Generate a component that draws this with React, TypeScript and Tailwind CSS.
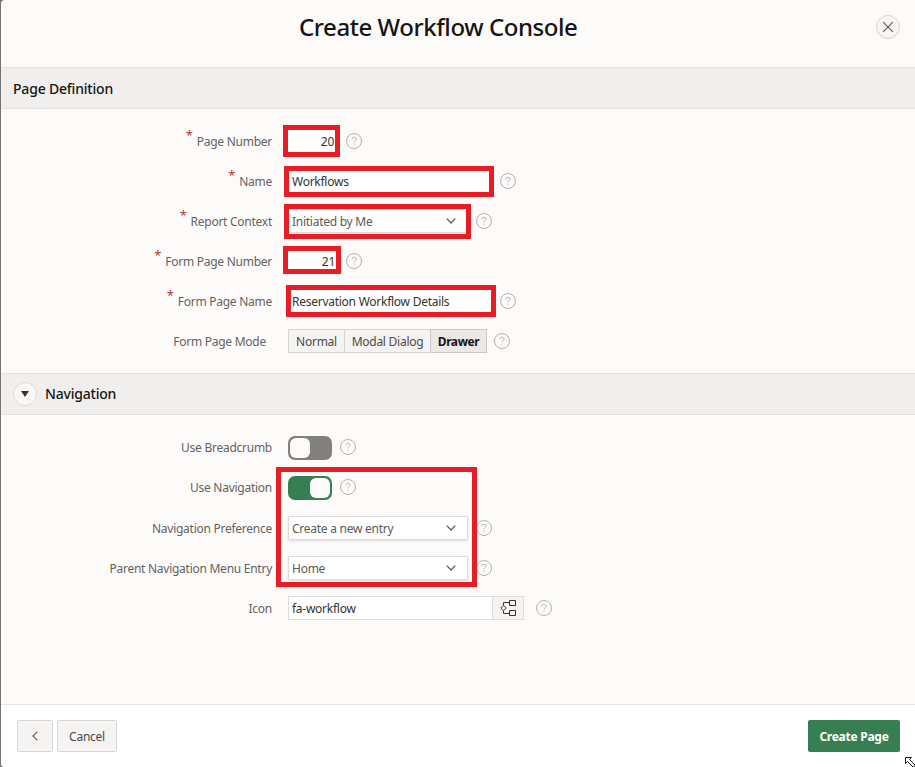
import React from "react";

function Help({ className }: { className: string }) {
  return (
    <svg className={`h-4 w-4 shrink-0 ${className}`} viewBox="0 0 16 16" fill="none" stroke="#b4b2b0" strokeWidth="1">
      <circle cx="8" cy="8" r="7.5" />
      <path d="M5.9 6.3C5.9 5 6.8 4.3 8 4.3s2.1.8 2.1 1.9c0 1.4-2.1 1.6-2.1 3.1" />
      <path d="M8 10.7v1.1" />
    </svg>
  );
}

function Chevron() {
  return (
    <svg className="h-[10px] w-[10px]" viewBox="0 0 10 10" fill="none" stroke="#5c5956" strokeWidth="1.3">
      <path d="M0.8 2.6 5 7l4.2-4.4" />
    </svg>
  );
}

function Mark({ className }: { className: string }) {
  return <div className={`pointer-events-none absolute border-[5px] border-[#e81c24] ${className}`} />;
}

type RowProps = { label: string; required?: boolean; indent?: string; children: React.ReactNode };

function Row({ label, required, indent = "mr-4", children }: RowProps) {
  return (
    <div className="relative flex h-10 items-center">
      <div className="flex w-[287px] justify-end pt-[2px]">
        <div className={`flex ${indent}`}>
          {required && <span className="-mt-[7px] mr-[4px] text-[13px] leading-4 text-[#b8372b]">*</span>}
          <span className="leading-4 whitespace-nowrap text-[#65625f]">{label}</span>
        </div>
      </div>
      {children}
    </div>
  );
}

function Field({ value, className }: { value: string; className: string }) {
  return (
    <div className={`flex items-center bg-white pt-[2px] whitespace-nowrap text-[#35322f] ${className}`}>
      {value}
    </div>
  );
}

function Select({ value }: { value: string }) {
  return (
    <div className="flex h-6 w-[180px] items-center justify-between border border-[#dfdddb] bg-white pr-[11px] pl-[3px] text-[#5c5956] shadow-[0_1px_2px_rgba(0,0,0,0.12)]">
      <span className="pt-[2px] whitespace-nowrap">{value}</span>
      <Chevron />
    </div>
  );
}

function Toggle({ on }: { on?: boolean }) {
  return (
    <div className={`mt-[2px] flex h-6 w-11 items-center rounded-[7px] px-0.5 ${on ? "justify-end bg-[#377f53]" : "bg-[#82807e]"}`}>
      <div className="h-5 w-5 rounded-[6px] bg-[#fcfbfa]" />
    </div>
  );
}

export default function App() {
  return (
    <div className="h-[767px] w-[915px] overflow-hidden bg-[#777573] pl-px font-['Noto_Sans','Liberation_Sans',sans-serif] text-[12px] leading-4 tracking-[-0.26px]">
      <div className="relative flex h-full flex-col rounded-tl-[4px] rounded-bl-[4px] bg-[#fcfbfa]">
        <header className="flex h-[67px] shrink-0 justify-end pt-[15px] pr-[15px]">
          <h1 className="-mt-[4px] mr-[299px] w-[278px] text-[24px] leading-8 font-medium tracking-[-0.43px] whitespace-nowrap text-[#161513]">Create Workflow Console</h1>
          <button className="flex h-6 w-6 items-center justify-center rounded-full border border-[#d5d3d1] bg-[#f7f6f5]">
            <svg className="h-3 w-3" viewBox="0 0 12 12" stroke="#5c5956" strokeWidth="1.1"><path d="m1.2 1.2 9.6 9.6M10.8 1.2 1.2 10.8" /></svg>
          </button>
        </header>

        <section className="h-[306px] shrink-0">
          <h2 className="flex h-[42px] items-center border-y border-[#e2e0de] bg-[#f0efee] pt-px pl-3 text-[14px] font-medium tracking-[-0.2px] text-[#161513]">Page Definition</h2>
          <div className="pt-[12px]">
            <Row label="Page Number" required>
              <Field value="20" className="h-[25px] w-[52px] justify-end pr-[6px]" /><Help className="ml-[6px]" />
              <Mark className="top-[4px] left-[282px] h-8 w-[57px]" />
            </Row>
            <Row label="Name" required>
              <Field value="Workflows" className="h-[25px] w-[206px] pl-[4px]" /><Help className="ml-[6px]" />
              <Mark className="top-[5px] left-[283px] h-[31px] w-[210px]" />
            </Row>
            <Row label="Report Context" required>
              <Select value="Initiated by Me" /><Help className="ml-[8px]" />
              <Mark className="top-[3px] left-[283px] h-[35px] w-[187px]" />
            </Row>
            <Row label="Form Page Number" required>
              <Field value="21" className="h-[25px] w-[52px] justify-end pr-[5px]" /><Help className="ml-[6px]" />
              <Mark className="top-[5px] left-[282px] h-[28px] w-[58px]" />
            </Row>
            <Row label="Form Page Name" required>
              <Field value="Reservation Workflow Details" className="h-[25px] w-[206px] pl-[4px]" /><Help className="ml-[6px]" />
              <Mark className="top-[4px] left-[285px] h-8 w-[210px]" />
            </Row>
            <Row label="Form Page Mode" indent="mr-[22px]">
              <div className="flex h-6 text-[#4c4946]">
                <div className="flex w-[57px] items-center justify-center border border-[#d6d4d2] bg-[#f5f4f3] pt-[2px]">Normal</div>
                <div className="flex w-[85px] items-center justify-center border-y border-[#d6d4d2] bg-[#f5f4f3] pt-[2px] whitespace-nowrap">Modal Dialog</div>
                <div className="flex w-[57px] items-center justify-center border border-[#c9c7c5] bg-[#ebe9e7] pt-[2px] font-bold tracking-[-0.4px] text-[#161513]">Drawer</div>
              </div>
              <Help className="ml-[7px]" />
            </Row>
          </div>
        </section>

        <section className="h-[331px] shrink-0">
          <h2 className="flex h-[42px] items-center border-y border-[#e2e0de] bg-[#f0efee] pl-3 text-[14px] font-medium tracking-[-0.2px] text-[#161513]">
            <span className="mr-2 flex h-6 w-6 items-center justify-center rounded-full border border-[#dddbd9] bg-[#f9f8f7]">
              <svg className="h-[6px] w-2" viewBox="0 0 8 6" fill="#35322f"><path d="M0 0h8L4 6z" /></svg>
            </span>
            Navigation
          </h2>
          <div className="relative pt-[12px]">
            <Row label="Use Breadcrumb"><Toggle /><Help className="ml-[8px]" /></Row>
            <Row label="Use Navigation"><Toggle on /><Help className="ml-[8px]" /></Row>
            <div className="pt-px">
              <Row label="Navigation Preference"><Select value="Create a new entry" /><Help className="ml-[8px]" /></Row>
              <Row label="Parent Navigation Menu Entry"><Select value="Home" /><Help className="ml-[8px]" /></Row>
              <Row label="Icon">
                <Field value="fa-workflow" className="h-6 w-[204px] border border-r-0 border-[#dfdddb] pl-[3px]" />
                <div className="flex h-6 w-8 items-center justify-center border border-[#dfdddb] bg-[#f5f4f3]">
                  <svg className="h-4 w-4" viewBox="0 0 16 16" fill="none" stroke="#35322f" strokeWidth="1">
                    <path d="M9.5.5h6v5h-6zM9.5 10.5h6v5h-6zM.8 8l2.7-2.7L6.2 8l-2.7 2.7zM3.5 5.3V2.5h6M3.5 10.7v2.8h6" />
                  </svg>
                </div>
                <Help className="ml-[12px]" />
              </Row>
            </div>
            <Mark className="top-[52px] left-[275px] h-[120px] w-[201px]" />
          </div>
        </section>

        <footer className="flex flex-1 items-start rounded-bl-[4px] border-t border-[#e8e6e4] bg-white pt-[15px] pr-[15px] pl-4 text-[#4c4946]">
          <button className="mr-1 flex h-8 w-9 items-center justify-center rounded-[2px] border border-[#dad8d6] bg-[#f5f4f3]">
            <svg className="h-[10px] w-[6px]" viewBox="0 0 6 10" fill="none" stroke="#5c5956" strokeWidth="1.1"><path d="M5.4.6.9 5l4.5 4.4" /></svg>
          </button>
          <button className="h-8 w-[60px] rounded-[2px] border border-[#dad8d6] bg-[#f5f4f3] pt-[2px]">Cancel</button>
          <button className="ml-auto h-8 w-[92px] rounded-[2px] bg-[#377f53] pt-[2px] font-bold whitespace-nowrap text-white">Create Page</button>
        </footer>
        <svg className="absolute right-0 bottom-0 h-[10px] w-[10px]" viewBox="0 0 10 10" fill="#fff" stroke="#161513" strokeWidth="1">
          <path d="M.5.5h6l-2 2L10 8v2H8L2.5 4.5l-2 2z" />
        </svg>
      </div>
    </div>
  );
}
